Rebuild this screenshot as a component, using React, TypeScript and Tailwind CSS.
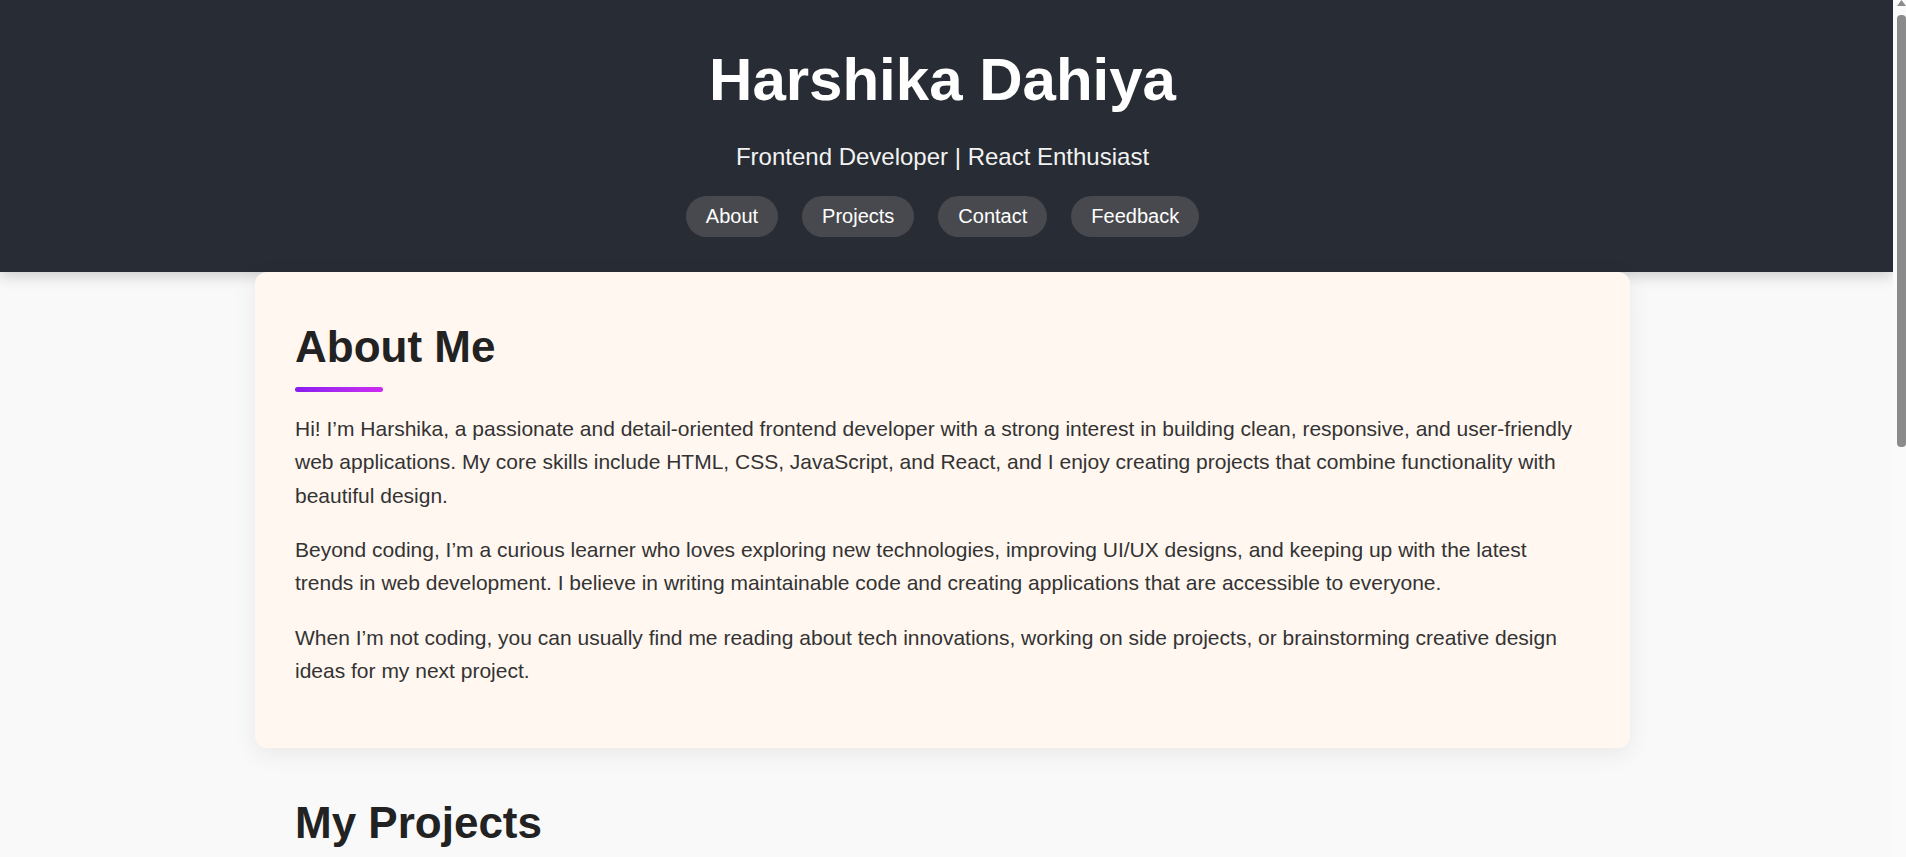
import React from "react";

const navItems = ["About", "Projects", "Contact", "Feedback"];

const projects = [
  {
    title: "Portfolio Website",
    desc: "A responsive personal portfolio built with React to showcase my projects and skills.",
  },
  {
    title: "Weather App",
    desc: "A weather application that displays real-time forecasts with a clean and simple interface.",
  },
  {
    title: "To-Do List",
    desc: "A task manager with add, edit, and delete features, storing data in local storage.",
  },
];

function FakeScrollbar() {
  return (
    <div className="sticky top-0 self-start h-screen w-[13px] shrink-0 bg-[#fafafa] flex flex-col pl-[4px]">
      <svg width="9" height="7" viewBox="0 0 9 7" className="block">
        <polygon points="4.5,0 9,6 0,6" fill="#8a8a8a" />
      </svg>
      <div className="mt-[8px] h-[432px] w-[9px] rounded-[4px] bg-[#8b8b8b]" />
    </div>
  );
}

export default function App() {
  return (
    <div
      className="flex bg-[#f9f9f9] text-[#333]"
      style={{ fontFamily: '"Liberation Sans", Arial, Helvetica, sans-serif' }}
    >
      <div className="flex-1 min-w-0">
        <header className="bg-[#282c34] text-white pt-[45px] pb-[35px] shadow-[0_4px_14px_rgba(0,0,0,0.18)]">
          <div className="w-[1885px] text-center">
            <h1 className="text-[60px] font-bold leading-[1.15] m-0">Harshika Dahiya</h1>
            <p className="text-[24px] leading-[1.15] mt-[29px] text-[#f2f2f2]">
              Frontend Developer | React Enthusiast
            </p>
            <nav className="flex justify-center gap-[24px] mt-[25px]">
              {navItems.map((item) => (
                <a
                  key={item}
                  href={"#" + item.toLowerCase()}
                  className="bg-[#48494e] text-white text-[20px] leading-[23px] px-[20px] py-[9px] rounded-full"
                >
                  {item}
                </a>
              ))}
            </nav>
          </div>
        </header>

        <main className="w-[1885px]">
          <section
            id="about"
            className="w-[1375px] mx-auto bg-[#fff7f0] rounded-xl pt-[50px] px-[40px] pb-[40px] shadow-[0_6px_24px_rgba(0,0,0,0.07)]"
          >
            <h2 className="text-[44px] font-bold leading-[1.15] text-[#222]">About Me</h2>
            <div className="w-[88px] h-[5px] rounded-full bg-gradient-to-r from-[#8a1cf0] to-[#cc2cf0] mt-[15px] mb-[20px]" />
            <p className="text-[21px] leading-[1.585] mb-[1em]">
              Hi! I’m Harshika, a passionate and detail-oriented frontend developer with a strong interest in
              building clean, responsive, and user-friendly web applications. My core skills include HTML, CSS,
              JavaScript, and React, and I enjoy creating projects that combine functionality with beautiful design.
            </p>
            <p className="text-[21px] leading-[1.585] mb-[1em]">
              Beyond coding, I’m a curious learner who loves exploring new technologies, improving UI/UX designs,
              and keeping up with the latest trends in web development. I believe in writing maintainable code and
              creating applications that are accessible to everyone.
            </p>
            <p className="text-[21px] leading-[1.585] mb-[1em]">
              When I’m not coding, you can usually find me reading about tech innovations, working on side projects,
              or brainstorming creative design ideas for my next project.
            </p>
          </section>

          <section id="projects" className="w-[1375px] mx-auto pt-[50px] px-[40px] pb-[40px]">
            <h2 className="text-[44px] font-bold leading-[1.15] text-[#222]">My Projects</h2>
            <div className="w-[88px] h-[5px] rounded-full bg-gradient-to-r from-[#8a1cf0] to-[#cc2cf0] mt-[15px] mb-[20px]" />
            <div className="grid grid-cols-3 gap-6">
              {projects.map((p) => (
                <div key={p.title} className="bg-white rounded-xl p-6 shadow-[0_4px_16px_rgba(0,0,0,0.08)]">
                  <h3 className="text-[24px] font-bold text-[#222] mb-2">{p.title}</h3>
                  <p className="text-[18px] leading-[1.6]">{p.desc}</p>
                </div>
              ))}
            </div>
          </section>

          <section id="contact" className="w-[1375px] mx-auto pt-[50px] px-[40px] pb-[60px]">
            <h2 className="text-[44px] font-bold leading-[1.15] text-[#222]">Contact</h2>
            <p className="text-[21px] leading-[1.6] mt-4">Email: harshika@example.com</p>
          </section>
        </main>
      </div>
      <FakeScrollbar />
    </div>
  );
}
